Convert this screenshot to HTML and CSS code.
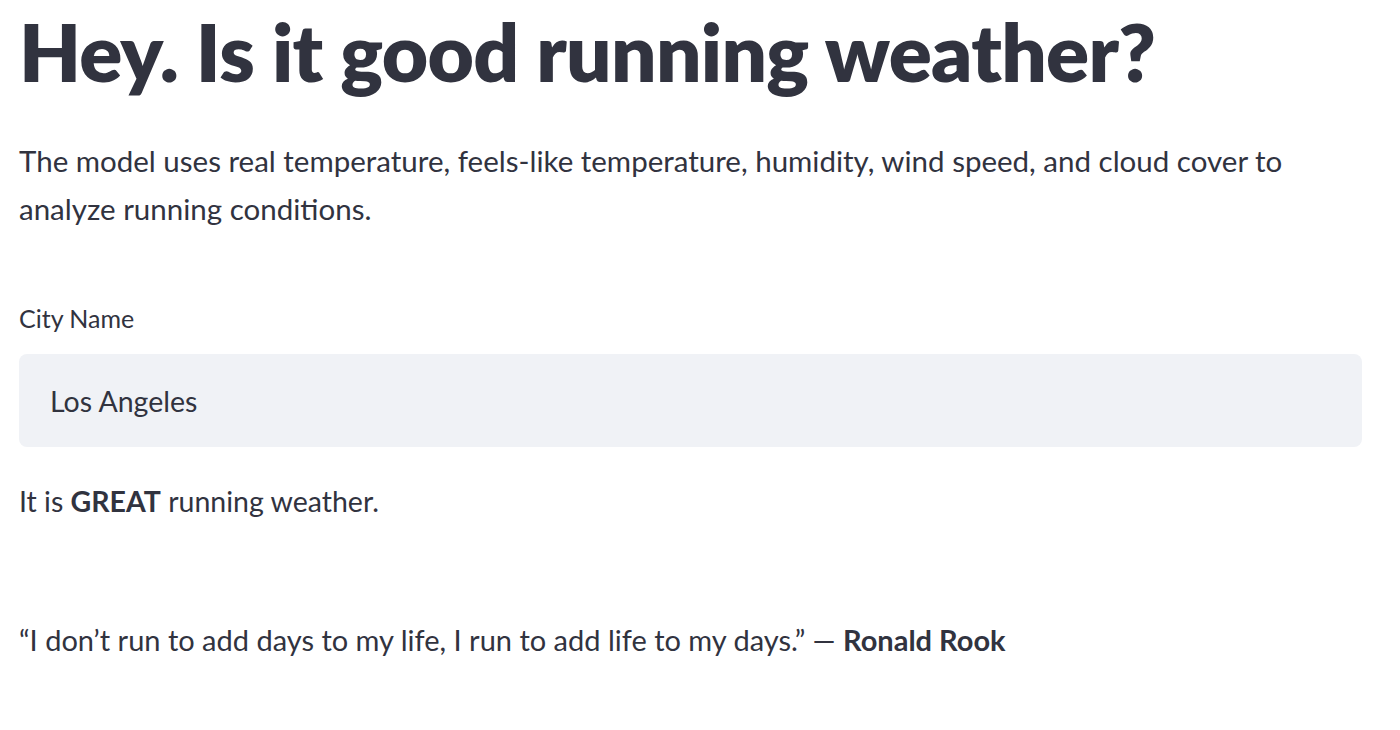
FILE: index.html
```html
<!DOCTYPE html>
<html>
<head>
<meta charset="utf-8">
<link rel="stylesheet" href="styles.css">
</head>
<body>
<main class="app">
  <h1 class="title">Hey. Is it good running weather?</h1>
  <p class="intro">The model uses real temperature, feels-like temperature, humidity, wind speed, and cloud cover to analyze running conditions.</p>
  <div class="field">
    <label class="label" for="city">City Name</label>
    <div class="input">Los Angeles</div>
  </div>
  <p class="result">It is <strong>GREAT</strong> running weather.</p>
  <p class="quote">“I don’t run to add days to my life, I run to add life to my days.” — <strong>Ronald Rook</strong></p>
</main>
</body>
</html>
```
FILE: styles.css
```css
html, body {
  margin: 0;
  padding: 0;
  background: #ffffff;
}
body {
  font-family: "Lato", "Open Sans", sans-serif;
  color: #31333f;
}
.app {
  width: 1343px;
  padding-left: 19px;
  display: flex;
  flex-direction: column;
}
.title {
  margin: 0;
  padding-top: 1px;
  font-size: 80px;
  line-height: 100px;
  font-weight: 800;
  letter-spacing: -0.7px;
}
.intro {
  margin: 36px 0 0 0;
  font-size: 29.5px;
  line-height: 48px;
}
.field {
  margin-top: 69px;
  display: flex;
  flex-direction: column;
}
.label {
  font-size: 25px;
  line-height: 32px;
}
.input {
  margin-top: 20px;
  height: 93px;
  box-sizing: border-box;
  padding-left: 31px;
  display: flex;
  align-items: center;
  background: #f0f2f6;
  border-radius: 8px;
  font-size: 28.5px;
}
.result {
  margin: 34px 0 0 0;
  font-size: 28.5px;
  line-height: 40px;
}
.quote {
  margin: 99px 0 0 0;
  font-size: 29px;
  line-height: 40px;
}
strong { font-weight: 700; }
```
